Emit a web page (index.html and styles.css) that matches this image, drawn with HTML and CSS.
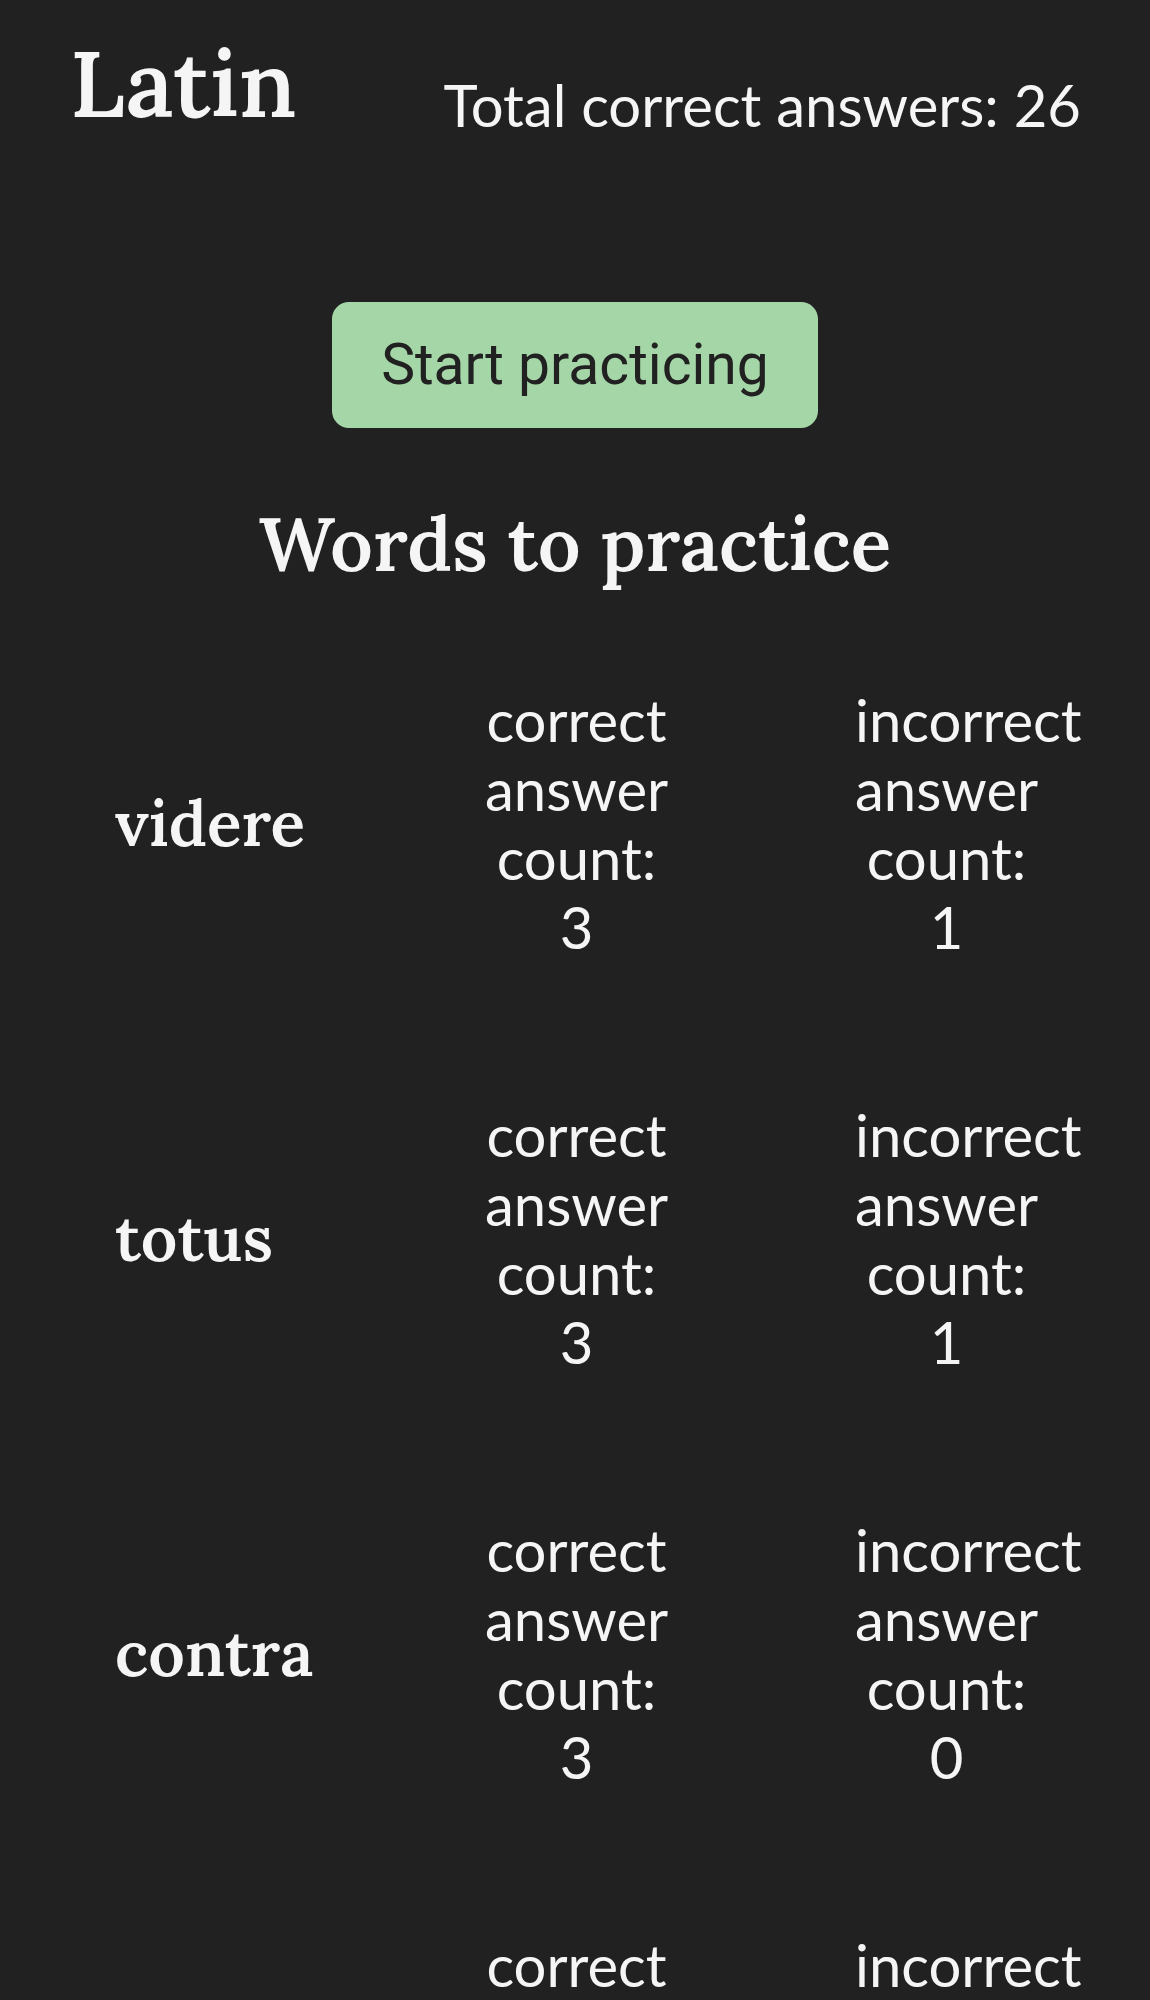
FILE: index.html
```html
<!DOCTYPE html>
<html lang="en">
<head>
  <meta charset="utf-8">
  <meta name="viewport" content="width=device-width, initial-scale=1">
  <title>Latin</title>
  <link rel="stylesheet" href="styles.css">
</head>
<body>
  <header class="header">
    <h1 class="language">Latin</h1>
    <p class="total">Total correct answers: 26</p>
  </header>
  <main class="main">
    <button class="start" type="button">Start practicing</button>
    <h2 class="title">Words to practice</h2>
    <ul class="words">
      <li class="word">
        <h3 class="term">videre</h3>
        <p class="count">correct answer count: 3</p>
        <p class="count">incorrect answer count: 1</p>
      </li>
      <li class="word">
        <h3 class="term">totus</h3>
        <p class="count">correct answer count: 3</p>
        <p class="count">incorrect answer count: 1</p>
      </li>
      <li class="word">
        <h3 class="term">contra</h3>
        <p class="count">correct answer count: 3</p>
        <p class="count">incorrect answer count: 0</p>
      </li>
      <li class="word">
        <h3 class="term"></h3>
        <p class="count">correct</p>
        <p class="count">incorrect</p>
      </li>
    </ul>
  </main>
</body>
</html>
```
FILE: styles.css
```css
* {
  box-sizing: border-box;
  margin: 0;
  padding: 0;
}

body {
  background: #212121;
  color: #f5f5f5;
  font: 58px/69px Lato, sans-serif;
}

.header {
  display: flex;
  justify-content: space-between;
  align-items: flex-start;
  padding: 29px 69px 0 70px;
}

.language,
.title,
.term {
  font-family: Lora, "Liberation Serif", serif;
  font-weight: 600;
}

.language {
  font-size: 92px;
  line-height: 108px;
}

.total {
  padding-top: 41px;
}

.main {
  display: flex;
  flex-direction: column;
  align-items: center;
  padding-top: 163px;
}

.start {
  padding: 28px 49px;
  border: 0;
  border-radius: 17px;
  background: #a5d6a7;
  color: #212121;
  font: 57px/70px Roboto, sans-serif;
}

.title {
  margin-top: 71px;
  font-size: 75px;
  line-height: 91px;
  text-align: center;
}

.words {
  display: flex;
  flex-direction: column;
  gap: 139px;
  width: 100%;
  margin-top: 95px;
  padding: 0 112px 0 115px;
  list-style: none;
}

.word {
  display: grid;
  grid-template-columns: repeat(3, minmax(0, 1fr));
  align-items: center;
  gap: 187px;
}

.term {
  font-size: 64px;
  line-height: 78px;
}

.count {
  text-align: center;
}
```
